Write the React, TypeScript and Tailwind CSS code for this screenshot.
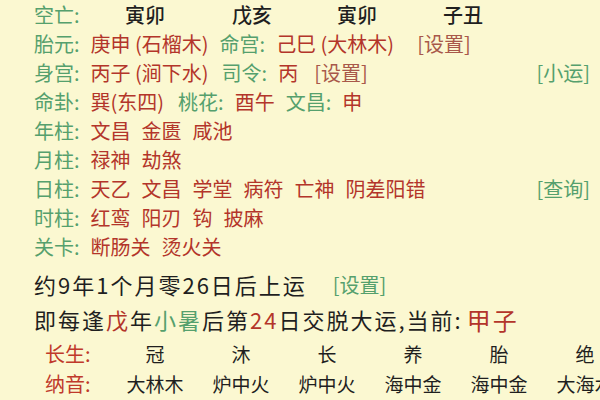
import React from "react";

const G = "text-[#55a06d]";
const R = "text-[#b3352a]";

function Row({ children, className = "" }: { children: React.ReactNode; className?: string }) {
  return <div className={`flex items-center h-[29px] gap-[11px] whitespace-nowrap ${className}`}>{children}</div>;
}

export default function App() {
  const cs = ["冠", "沐", "长", "养", "胎", "绝"];
  const ny = ["大林木", "炉中火", "炉中火", "海中金", "海中金", "大海水"];
  return (
    <div
      className="w-[600px] h-[400px] overflow-hidden bg-[#fbf8d1] pl-[34px] pr-[10px] text-[20px] leading-[29px]"
      style={{ fontFamily: '"Noto Sans CJK SC", "Noto Sans", sans-serif' }}
    >
      <div className="grid grid-cols-[91px_107px_105px_106px_106px] h-[29px] items-center whitespace-nowrap">
        <span className={G}>空亡:</span>
        <span className="text-[#1f1f1f] font-medium">寅卯</span>
        <span className="text-[#1f1f1f] font-medium">戊亥</span>
        <span className="text-[#1f1f1f] font-medium">寅卯</span>
        <span className="text-[#1f1f1f] font-medium">子丑</span>
      </div>
      <Row>
        <span className={G}>胎元:</span>
        <span className={R}>庚申 (石榴木)</span>
        <span className={G}>命宫:</span>
        <span className={R}>己巳 (大林木)</span>
        <span className="text-[#a8584a] ml-[12px]">[设置]</span>
      </Row>
      <Row>
        <span className={G}>身宫:</span>
        <span className={R}>丙子 (涧下水)</span>
        <span className={`${G} ml-[2px]`}>司令:</span>
        <span className={R}>丙</span>
        <span className="text-[#a8584a] ml-[5px]">[设置]</span>
        <span className={`${G} ml-auto`}>[小运]</span>
      </Row>
      <Row>
        <span className={G}>命卦:</span>
        <span className={R}>巽(东四)</span>
        <span className={`${G} ml-[3px]`}>桃花:</span>
        <span className={R}>酉午</span>
        <span className={G}>文昌:</span>
        <span className={R}>申</span>
      </Row>
      <Row>
        <span className={G}>年柱:</span>
        <span className={R}>文昌</span>
        <span className={R}>金匮</span>
        <span className={R}>咸池</span>
      </Row>
      <Row>
        <span className={G}>月柱:</span>
        <span className={R}>禄神</span>
        <span className={R}>劫煞</span>
      </Row>
      <Row>
        <span className={G}>日柱:</span>
        <span className={R}>天乙</span>
        <span className={R}>文昌</span>
        <span className={R}>学堂</span>
        <span className={R}>病符</span>
        <span className={R}>亡神</span>
        <span className={R}>阴差阳错</span>
        <span className={`${G} ml-auto`}>[查询]</span>
      </Row>
      <Row>
        <span className={G}>时柱:</span>
        <span className={R}>红鸾</span>
        <span className={R}>阳刃</span>
        <span className={R}>钩</span>
        <span className={R}>披麻</span>
      </Row>
      <Row>
        <span className={G}>关卡:</span>
        <span className={R}>断肠关</span>
        <span className={R}>烫火关</span>
      </Row>
      <div className="mt-[8px] h-[30px] flex items-center gap-[26px] whitespace-nowrap">
        <span className="text-[22px] tracking-[2px] text-[#1f1f1f]">约9年1个月零26日后上运</span>
        <span className={`${G} text-[20px]`}>[设置]</span>
      </div>
      <div className="mt-[5px] h-[30px] flex items-center whitespace-nowrap text-[22px] tracking-[2px] text-[#1f1f1f]">
        <span>即每逢</span>
        <span className={R}>戊</span>
        <span>年</span>
        <span className={G}>小暑</span>
        <span>后第</span>
        <span className={R}>24</span>
        <span>日交脱大运,当前:</span>
        <span className={`${R} text-[24px] ml-[4px]`}>甲子</span>
      </div>
      <div className="mt-[5px] grid grid-cols-[67px_86px_86px_86px_86px_86px_86px] -ml-[23px] pl-[34px] text-[19px] whitespace-nowrap">
        <span className="text-[#c0392b] text-[20px] h-[30px] leading-[30px]">长生:</span>
        {cs.map((c, i) => (
          <span key={i} className="text-center text-[#1f1f1f] h-[30px] leading-[30px]">{c}</span>
        ))}
        <span className="text-[#c0392b] text-[20px] h-[30px] leading-[30px]">纳音:</span>
        {ny.map((c, i) => (
          <span key={i} className="text-center text-[#1f1f1f] h-[30px] leading-[30px]">{c}</span>
        ))}
      </div>
    </div>
  );
}
